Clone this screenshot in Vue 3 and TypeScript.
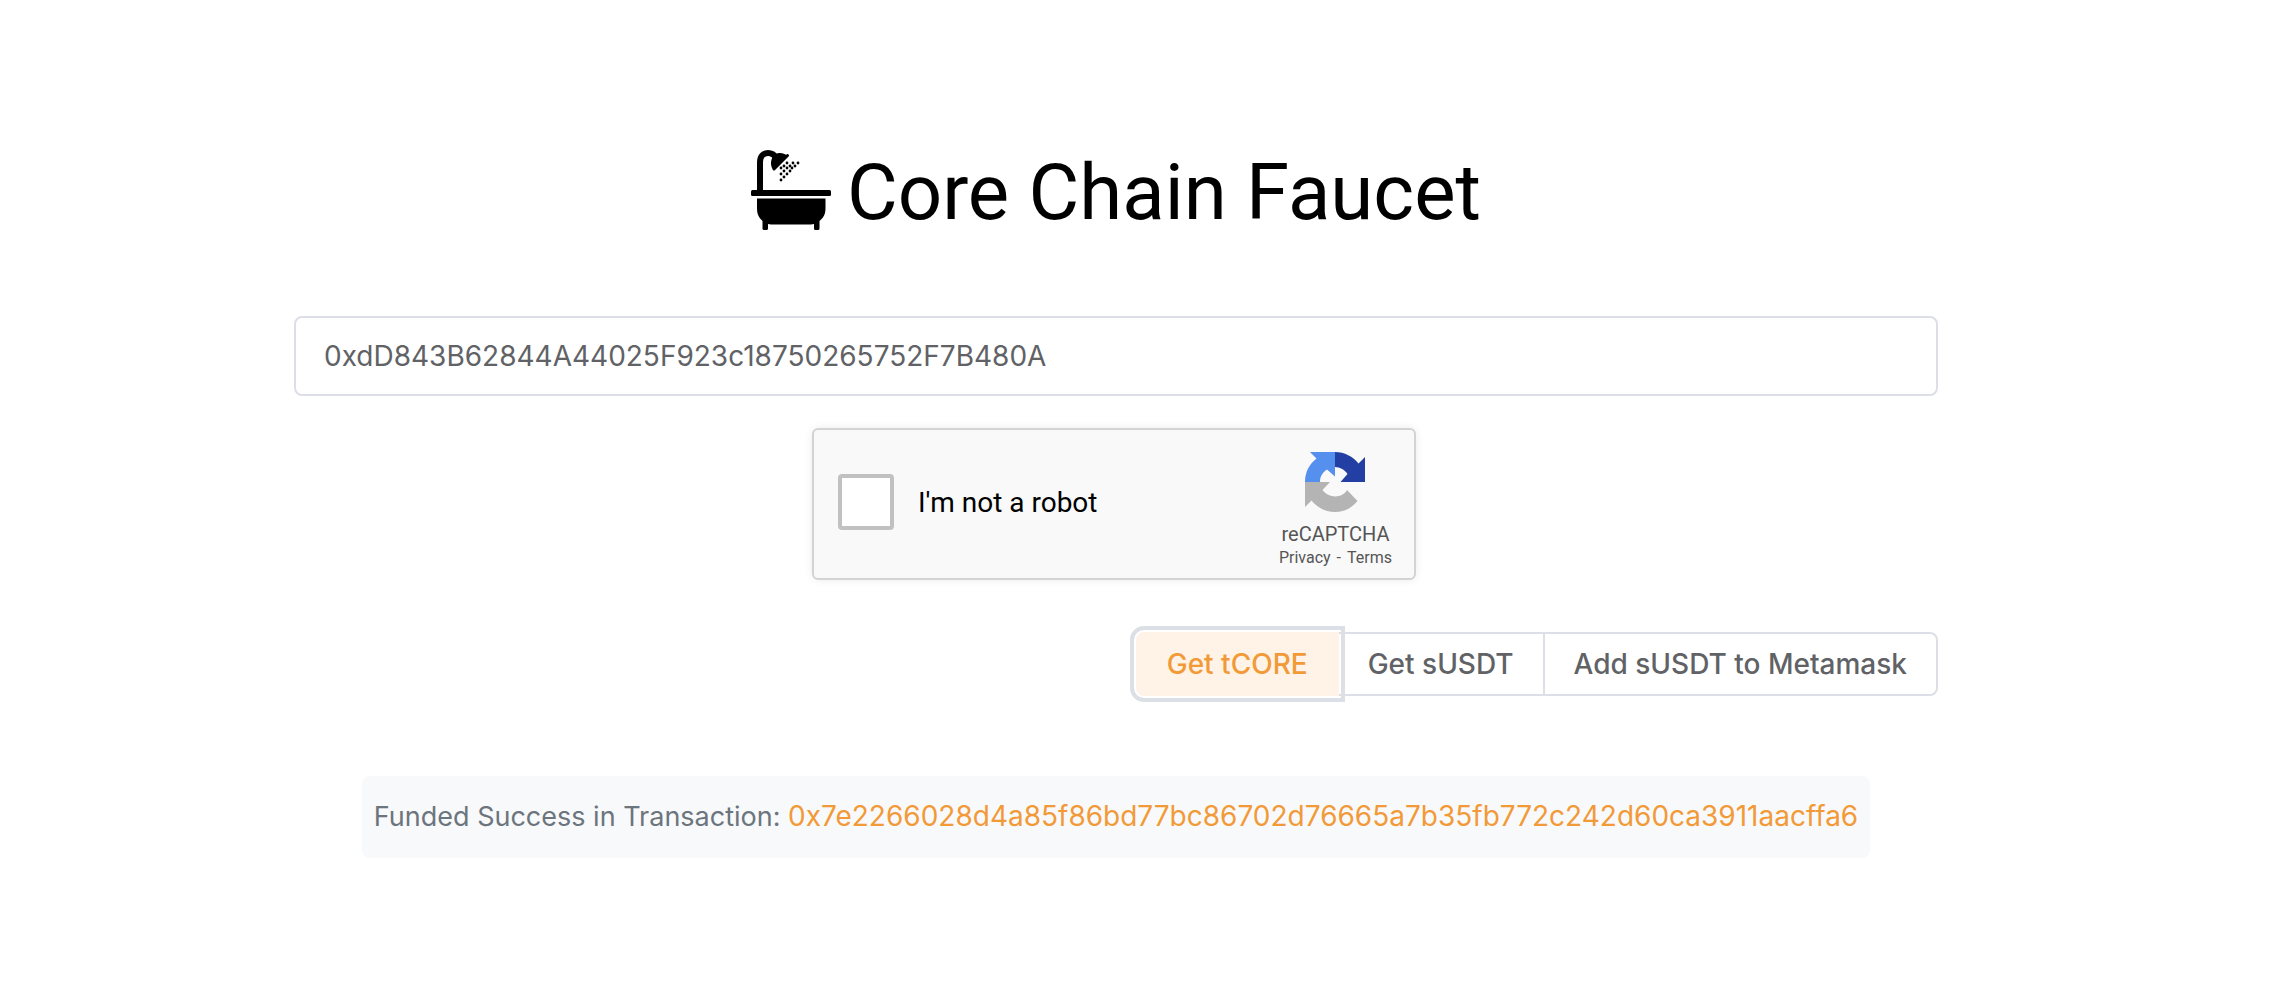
<script setup lang="ts">
import { ref } from 'vue'

const address = ref('0xdD843B62844A44025F923c18750265752F7B480A')
const verified = ref(false)
const txHash = '0x7e2266028d4a85f86bd77bc86702d76665a7b35fb772c242d60ca3911aacffa6'

const actions = ['Get tCORE', 'Get sUSDT', 'Add sUSDT to Metamask']
const active = ref('Get tCORE')

const drops: [number, number][] = [
  [36, 13], [42, 13], [47, 13],
  [33, 16], [39, 16], [44, 16],
  [30, 18], [36, 18], [41, 18],
  [33, 21], [39, 21],
  [30, 24], [36, 24],
  [33, 27], [30, 30],
]
</script>

<template>
  <main class="page">
    <h1 class="title">
      <svg class="tub" viewBox="0 0 80 80" aria-hidden="true">
        <path d="M9 42V12C9 6 12.500 3 17 3C21 3 23.500 5 25.500 8" fill="none" stroke="#000" stroke-width="6" />
        <path d="M36 5.500C33 2.500 27 2 24 4.500C19.500 8 19 14.500 21.500 19Z" />
        <path d="M23 19L36.500 5.500" stroke="#000" stroke-width="3" stroke-linecap="round" />
        <circle v-for="([x, y], i) in drops" :key="i" :cx="x" :cy="y" r="1.400" />
        <rect x="0" y="40" width="80" height="6" rx="1.500" />
        <path d="M6 48.500H74.500V58C74.500 64 73 67 68.500 71V78.500Q68.500 80 67 80H64.500Q63 80 63 78.500V74L60 74.500H20L17 74V78.500Q17 80 15.500 80H13Q11.500 80 11.500 78.500V71C7.500 67 6 64 6 58Z" />
      </svg>
      <span>Core Chain Faucet</span>
    </h1>

    <input v-model="address" class="address" type="text" aria-label="Wallet address" spellcheck="false">

    <section class="captcha">
      <label class="check">
        <input v-model="verified" type="checkbox">
        <span>I'm not a robot</span>
      </label>
      <div class="brand">
        <svg viewBox="0 0 60 60" aria-hidden="true">
          <path fill="#233fa3" d="M60 30V5L53.500 11.500C48 4.500 39.500 0 30 0V15C35 15 40 18 42.500 22L35.500 30Z" />
          <path fill="#5590ee" d="M30 0H5L11.500 6.500C4.500 12 0 20 0 30H15C15 24 18 20 22 17.500L30 24.500Z" />
          <path fill="#b4b4b4" d="M0 30V55L6.500 48.500C12 55.500 20.500 60 30 60C39 60 47 56 52.500 49L42 38C38 46 24 47 17.500 38L25 30Z" />
        </svg>
        <span class="name">reCAPTCHA</span>
        <span class="legal"><a href="#privacy">Privacy</a><span>-</span><a href="#terms">Terms</a></span>
      </div>
    </section>

    <div class="actions">
      <button
        v-for="label in actions"
        :key="label"
        type="button"
        :class="{ active: active === label }"
        @click="active = label"
      >{{ label }}</button>
    </div>

    <p class="message">Funded Success in Transaction: <a href="#tx">{{ txHash }}</a></p>
  </main>
</template>

<style>
body {
  margin: 0;
  background: #fff;
}
</style>

<style scoped>
.page {
  display: flex;
  flex-direction: column;
  align-items: center;
  padding: 150px 338px 0 294px;
  font-family: Inter, "Liberation Sans", sans-serif;
  font-size: 28px;
  color: #606266;
}
.title {
  display: flex;
  align-items: flex-start;
  gap: 16px;
  margin: 0;
  font-family: Roboto, sans-serif;
  font-size: 78px;
  font-weight: 400;
  line-height: 86px;
  white-space: nowrap;
  color: #000;
}
.tub {
  width: 80px;
  height: 80px;
}
.address {
  box-sizing: border-box;
  width: 100%;
  height: 80px;
  margin-top: 80px;
  padding: 0 28px;
  border: 2px solid #dcdfe6;
  border-radius: 8px;
  font: inherit;
  color: inherit;
  background: #fff;
  outline: none;
}
.captcha {
  box-sizing: border-box;
  display: flex;
  justify-content: space-between;
  width: 604px;
  height: 152px;
  margin-top: 32px;
  margin-right: 4px;
  padding: 0 22px 0 24px;
  border: 2px solid #d3d3d3;
  border-radius: 6px;
  background: #f9f9f9;
  box-shadow: 0 0 8px rgba(0, 0, 0, 0.08);
  font-family: Roboto, sans-serif;
}
.check {
  display: flex;
  align-items: center;
  gap: 24px;
  padding-bottom: 4px;
  color: #000;
}
.check input {
  appearance: none;
  box-sizing: border-box;
  width: 56px;
  height: 56px;
  margin: 0;
  border: 4px solid #c1c1c1;
  border-radius: 4px;
  background: #fff;
}
.brand {
  display: flex;
  flex-direction: column;
  align-items: center;
  padding-top: 22px;
  color: #555;
}
.brand svg {
  width: 60px;
  height: 60px;
}
.name {
  margin-top: 10px;
  font-size: 20px;
  line-height: 24px;
}
.legal {
  display: flex;
  gap: 6px;
  font-size: 16px;
  line-height: 24px;
}
.legal a {
  color: inherit;
  text-decoration: none;
}
.actions {
  display: flex;
  align-self: flex-end;
  margin-top: 52px;
}
.actions button {
  height: 64px;
  margin-left: -2px;
  padding: 0 29px;
  border: 2px solid #dcdfe6;
  font: inherit;
  font-weight: 500;
  color: inherit;
  background: #fff;
}
.actions button:first-child {
  border-radius: 8px 0 0 8px;
}
.actions button:last-child {
  border-radius: 0 8px 8px 0;
}
.actions .active {
  z-index: 1;
  border-color: #fef3e6;
  color: #f29a38;
  background: #fef3e6;
  outline: 4px solid #dcdfe6;
  outline-offset: 2px;
}
.message {
  margin: 80px 0 0;
  padding: 20px 12px;
  border-radius: 8px;
  font-size: 27px;
  line-height: 42px;
  color: #6c757d;
  background: #f8f9fb;
}
.message a {
  font-size: 28px;
  line-height: 28px;
  color: #f29a38;
  text-decoration: none;
}
</style>
